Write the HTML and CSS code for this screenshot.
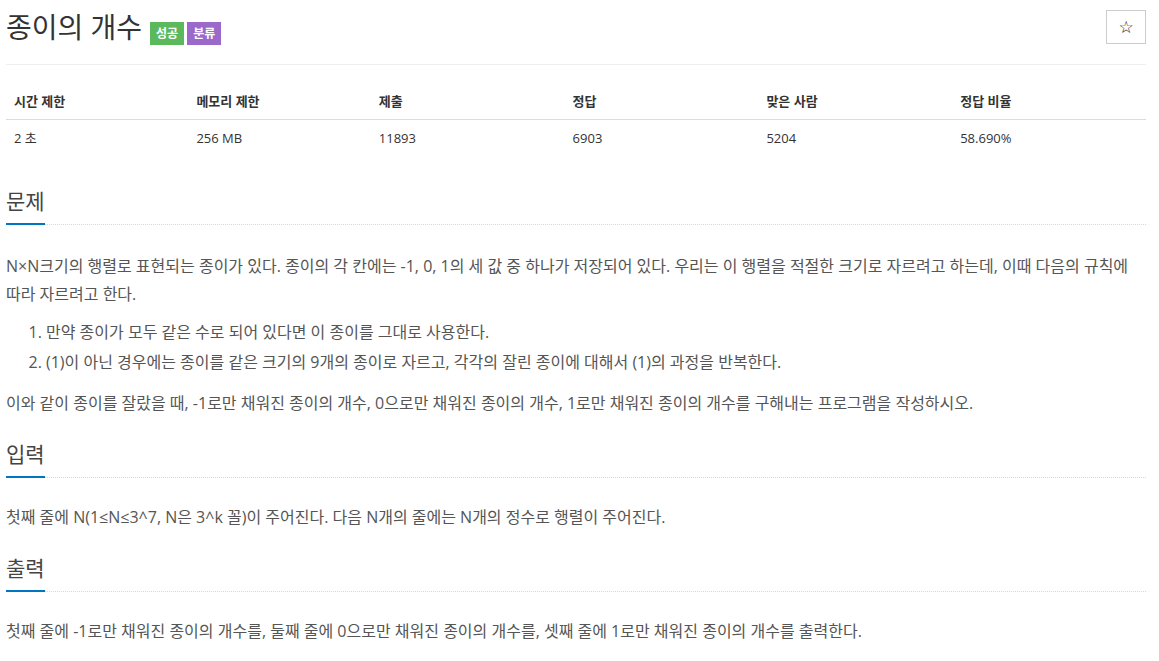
FILE: index.html
```html
<!DOCTYPE html>
<html lang="ko">
<head>
<meta charset="utf-8">
<title>종이의 개수</title>
<link rel="stylesheet" href="styles.css">
</head>
<body>
<div class="container">
  <div class="page-header">
    <div class="title-row">
      <span class="title">종이의 개수</span>
      <span class="badge badge-success">성공</span>
      <span class="badge badge-tag">분류</span>
    </div>
    <button class="star-btn" type="button">☆</button>
  </div>

  <table class="info-table">
    <thead>
      <tr>
        <th class="c1">시간 제한</th>
        <th class="c1">메모리 제한</th>
        <th class="c2">제출</th>
        <th class="c2">정답</th>
        <th class="c2">맞은 사람</th>
        <th class="c2">정답 비율</th>
      </tr>
    </thead>
    <tbody>
      <tr>
        <td>2 초</td>
        <td>256 MB</td>
        <td>11893</td>
        <td>6903</td>
        <td>5204</td>
        <td>58.690%</td>
      </tr>
    </tbody>
  </table>

  <section class="section section-first">
    <div class="headline"><h2>문제</h2></div>
    <div class="problem-text">
      <p>N×N크기의 행렬로 표현되는 종이가 있다. 종이의 각 칸에는 -1, 0, 1의 세 값 중 하나가 저장되어 있다. 우리는 이 행렬을 적절한 크기로 자르려고 하는데, 이때 다음의 규칙에 따라 자르려고 한다.</p>
      <ol>
        <li>만약 종이가 모두 같은 수로 되어 있다면 이 종이를 그대로 사용한다.</li>
        <li>(1)이 아닌 경우에는 종이를 같은 크기의 9개의 종이로 자르고, 각각의 잘린 종이에 대해서 (1)의 과정을 반복한다.</li>
      </ol>
      <p>이와 같이 종이를 잘랐을 때, -1로만 채워진 종이의 개수, 0으로만 채워진 종이의 개수, 1로만 채워진 종이의 개수를 구해내는 프로그램을 작성하시오.</p>
    </div>
  </section>

  <section class="section">
    <div class="headline"><h2>입력</h2></div>
    <div class="problem-text">
      <p>첫째 줄에 N(1≤N≤3^7, N은 3^k 꼴)이 주어진다. 다음 N개의 줄에는 N개의 정수로 행렬이 주어진다.</p>
    </div>
  </section>

  <section class="section">
    <div class="headline"><h2>출력</h2></div>
    <div class="problem-text">
      <p>첫째 줄에 -1로만 채워진 종이의 개수를, 둘째 줄에 0으로만 채워진 종이의 개수를, 셋째 줄에 1로만 채워진 종이의 개수를 출력한다.</p>
    </div>
  </section>
</div>
</body>
</html>
```

FILE: styles.css
```css
html, body {
  margin: 0;
  padding: 0;
  background: #fff;
}

body {
  font-family: "Open Sans", "Noto Sans CJK KR", sans-serif;
  font-size: 14px;
  color: #333;
}

.container {
  width: 1140px;
  padding-left: 6px;
  display: flex;
  flex-direction: column;
}

.page-header {
  display: flex;
  justify-content: space-between;
  align-items: flex-start;
  padding: 11px 0 0 0;
  height: 53px;
  border-bottom: 1px solid #eee;
}

.title-row {
  display: flex;
  align-items: flex-start;
}

.title {
  font-size: 28px;
  line-height: 32px;
  color: #333;
  margin-right: 8px;
}

.badge {
  margin-top: 11px;
  height: 23px;
  line-height: 23px;
  padding: 0 6px;
  font-size: 12px;
  font-weight: 700;
  color: #fff;
  margin-right: 3px;
}

.badge-success {
  background: #5cb85c;
}

.badge-tag {
  background: #9b69c9;
}

.star-btn {
  margin-top: -1px;
  width: 40px;
  height: 34px;
  border: 1px solid #ccc;
  background: #fff;
  font-size: 17px;
  line-height: 1;
  color: #222;
  padding: 0;
  border-radius: 0;
  font-family: "DejaVu Sans", sans-serif;
}

.info-table {
  width: 100%;
  border-collapse: collapse;
  margin-top: 19px;
  margin-bottom: 18px;
  font-size: 13px;
}

.info-table th {
  text-align: left;
  font-weight: 700;
  padding: 8px 8px;
  line-height: 19px;
  border-bottom: 1px solid #ddd;
  color: #333;
}

.info-table .c1 {
  width: 16%;
}

.info-table .c2 {
  width: 17%;
}

.info-table td {
  padding: 8px 8px;
  line-height: 20px;
  color: #333;
}

.section {
  display: flow-root;
}

.headline {
  margin-top: 13px;
  margin-bottom: 25px;
  border-bottom: 1px dotted #d8d8d8;
}

.section-first .headline {
  margin-bottom: 27px;
}

.headline h2 {
  display: inline-block;
  margin: 0 0 -1px 0;
  font-size: 21px;
  font-weight: 400;
  line-height: 28px;
  padding-bottom: 8px;
  border-bottom: 2px solid #0076c0;
  color: #444;
}

.problem-text {
  font-size: 16px;
  color: #555;
  line-height: 28px;
  word-break: keep-all;
}

.problem-text p {
  margin: 0 0 10px 0;
}

.problem-text ol {
  margin: 0 0 13px 0;
  padding-left: 40px;
}

.problem-text li {
  margin-bottom: 2px;
}
```
